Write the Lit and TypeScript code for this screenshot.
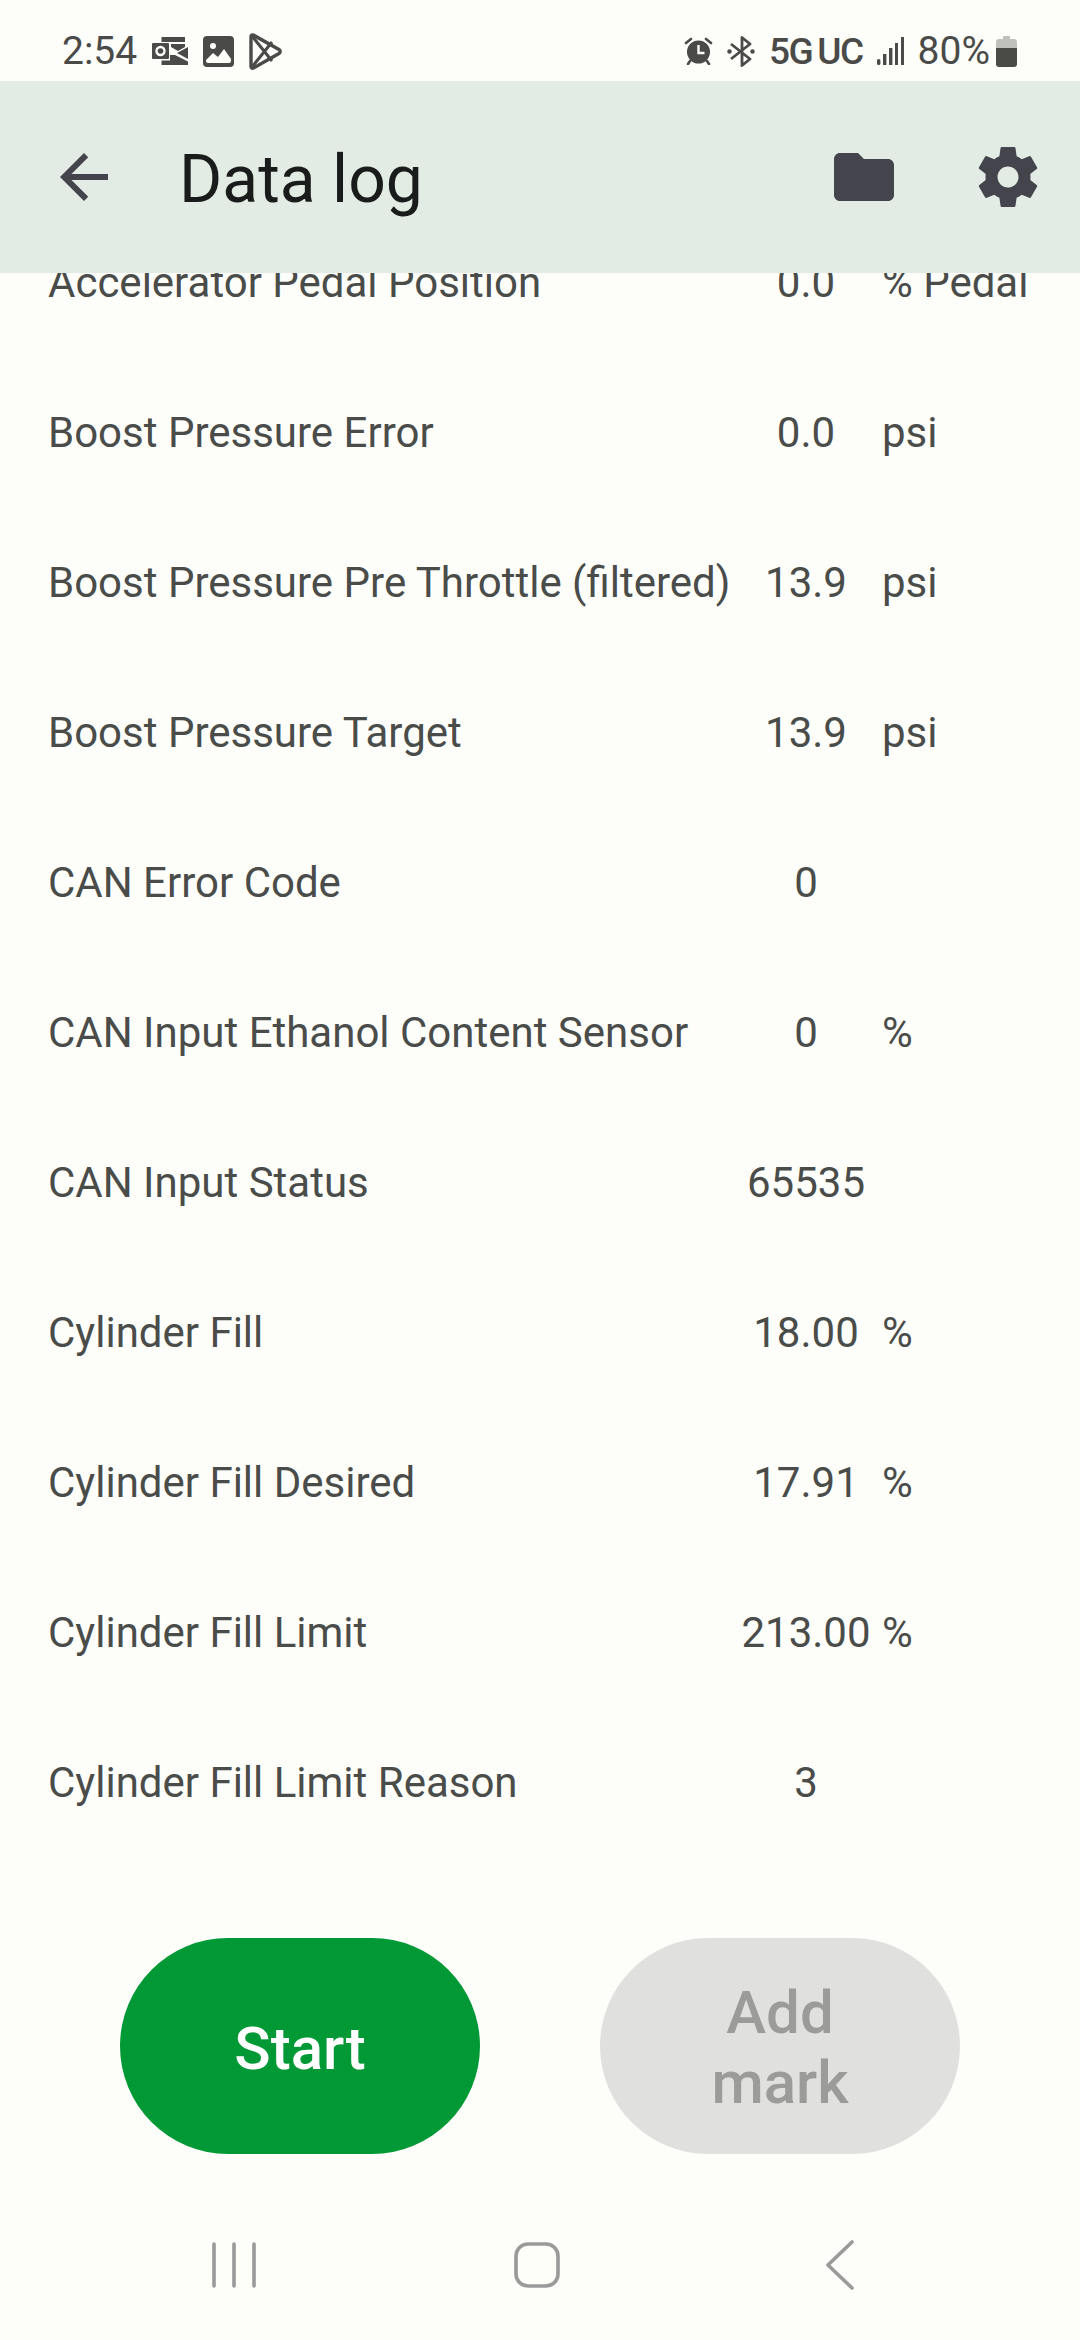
import { LitElement, html, css, svg } from 'lit';
import { customElement } from 'lit/decorators.js';

interface LogRow {
  name: string;
  value: string;
  unit: string;
}

const rows: LogRow[] = [
  { name: 'Accelerator Pedal Position', value: '0.0', unit: '% Pedal' },
  { name: 'Boost Pressure Error', value: '0.0', unit: 'psi' },
  { name: 'Boost Pressure Pre Throttle (filtered)', value: '13.9', unit: 'psi' },
  { name: 'Boost Pressure Target', value: '13.9', unit: 'psi' },
  { name: 'CAN Error Code', value: '0', unit: '' },
  { name: 'CAN Input Ethanol Content Sensor', value: '0', unit: '%' },
  { name: 'CAN Input Status', value: '65535', unit: '' },
  { name: 'Cylinder Fill', value: '18.00', unit: '%' },
  { name: 'Cylinder Fill Desired', value: '17.91', unit: '%' },
  { name: 'Cylinder Fill Limit', value: '213.00', unit: '%' },
  { name: 'Cylinder Fill Limit Reason', value: '3', unit: '' },
];

const icon = (w: number, h: number, vb: string, body: unknown) =>
  html`<svg width=${w} height=${h} viewBox=${vb}>${body}</svg>`;

@customElement('app-root')
export class AppRoot extends LitElement {
  static styles = css`
    :host {
      display: flex;
      flex-direction: column;
      height: 2340px;
      background: #fdfefa;
      font-family: Roboto, 'Noto Sans', sans-serif;
      color: #454745;
      overflow: hidden;
    }
    svg {
      display: block;
      flex: none;
    }
    .status {
      height: 81px;
      flex: none;
      display: flex;
      align-items: center;
      justify-content: space-between;
      padding: 21px 63px 0 62px;
      box-sizing: border-box;
      font-size: 39px;
      color: #4a4b49;
    }
    .status-left,
    .status-right {
      display: flex;
      align-items: center;
    }
    .status-left {
      gap: 15px;
    }
    .status-right {
      gap: 14px;
    }
    .net {
      display: flex;
      gap: 5px;
      font-weight: 500;
      letter-spacing: -1.500px;
      font-size: 37px;
    }
    .batt {
      margin-left: -8px;
    }
    .appbar {
      height: 192px;
      flex: none;
      display: flex;
      align-items: center;
      padding: 0 36px 0 48px;
      background: #e2ebe4;
      position: relative;
      z-index: 1;
    }
    .appbar svg {
      fill: #44444c;
    }
    .title {
      flex: 1;
      margin-left: 59px;
      font-size: 66px;
      color: #191c1a;
      padding-top: 4px;
    }
    .actions {
      display: flex;
      gap: 72px;
    }
    .list {
      flex: 1;
      overflow: hidden;
      min-height: 0;
    }
    .rows {
      margin-top: -66px;
    }
    .row {
      height: 150px;
      display: grid;
      grid-template-columns: 682px 152px 1fr;
      align-items: center;
      padding-left: 48px;
      font-size: 42px;
      color: #4a4c4a;
      white-space: nowrap;
    }
    .value {
      text-align: center;
    }
    .footer {
      flex: none;
      display: flex;
      justify-content: center;
      gap: 120px;
      padding-bottom: 36px;
    }
    .btn {
      width: 360px;
      height: 216px;
      border-radius: 108px;
      display: flex;
      align-items: center;
      justify-content: center;
      text-align: center;
      font-size: 60px;
      line-height: 70px;
      font-weight: 500;
      box-sizing: border-box;
    }
    .start {
      background: #019836;
      color: #fff;
      padding-top: 6px;
    }
    .mark {
      background: #e0e1de;
      color: #9b9c99;
      padding: 4px 90px 0;
    }
    .nav {
      height: 150px;
      flex: none;
      display: flex;
      align-items: center;
      padding: 0 0 0 211px;
    }
    .nav .recents {
      width: 303px;
    }
    .nav .home {
      width: 311px;
    }
  `;

  render() {
    return html`
      <div class="status">
        <div class="status-left">
          <span>2:54</span>
          ${icon(36, 28, '0 0 36 28', svg`
            <g fill="#4a4b49">
              <path d="M9.500 0H33v5H9.500z" />
              <rect x="0" y="6" width="17" height="16" rx="1" />
              <path d="M19 7h14v3l-7 4-7-4zM36 10v12l-11-6z" />
              <path d="M9.500 23.500H18V18l5 0 13 6.500V28H9.500z" />
            </g>
            <circle cx="8.500" cy="14" r="4" fill="none" stroke="#fdfefa" stroke-width="2.400" />
          `)}
          ${icon(31, 31, '0 0 31 31', svg`
            <rect width="31" height="31" rx="4" fill="#4a4b49" />
            <circle cx="10" cy="10" r="3" fill="#fdfefa" />
            <path fill="#fdfefa" d="M3 24l7-7 5 4 6-8 7 10v2a2 2 0 0 1-2 2H5a2 2 0 0 1-2-2z" />
          `)}
          ${icon(33, 37, '0 0 33 37', svg`
            <path fill="none" stroke="#4a4b49" stroke-width="3.400" stroke-linejoin="round"
              d="M2 3.500c0-1.500 1.200-2 2.400-1.400L30 16.500c1.600 1 1.600 3 0 4L4.400 35c-1.200.6-2.400 0-2.400-1.500z" />
            <path fill="none" stroke="#4a4b49" stroke-width="3" d="M3 3l20 25M3 34L23 9" />
          `)}
        </div>
        <div class="status-right">
          ${icon(29, 28, '0 0 29 28', svg`
            <circle cx="14.500" cy="15" r="11.500" fill="#4a4b49" />
            <path fill="none" stroke="#fdfefa" stroke-width="2.400" d="M14.500 8v8h6" />
            <path fill="none" stroke="#4a4b49" stroke-width="2.600" stroke-linecap="round"
              d="M2 6l5-4M27 6l-5-4M6 24l-2 3M23 24l2 3" />
          `)}
          ${icon(28, 31, '0 0 28 31', svg`
            <path fill="none" stroke="#4a4b49" stroke-width="2.800" stroke-linejoin="round"
              d="M4 8l19 15-8 6.500V1.500l8 6.500L4 23" />
            <circle cx="2.500" cy="15.500" r="2.200" fill="#4a4b49" />
            <circle cx="25.500" cy="15.500" r="2.200" fill="#4a4b49" />
          `)}
          <span class="net"><span>5G</span><span>UC</span></span>
          ${icon(27, 28, '0 0 27 28', svg`
            <g fill="#4a4b49">
              <rect x="0" y="22" width="3.400" height="6" rx="1.500" />
              <rect x="6" y="17" width="3.400" height="11" />
              <rect x="12" y="11" width="3.400" height="17" />
              <rect x="18" y="6" width="3" height="22" />
              <rect x="24" y="0" width="3" height="28" />
            </g>
          `)}
          <span>80%</span>
          <span class="batt">${icon(21, 31, '0 0 21 31', svg`
            <path fill="#c0c1bd" d="M7 0h7v3h4a3 3 0 0 1 3 3v6H0V6a3 3 0 0 1 3-3h4z" />
            <path fill="#4a4b47" d="M0 12h21v16a3 3 0 0 1-3 3H3a3 3 0 0 1-3-3z" />
          `)}</span>
        </div>
      </div>
      <div class="appbar">
        ${icon(72, 72, '0 0 24 24', svg`<path d="M20 11H7.830l5.590-5.590L12 4l-8 8 8 8 1.410-1.410L7.830 13H20v-2z" />`)}
        <div class="title">Data log</div>
        <div class="actions">
          ${icon(72, 72, '0 0 24 24', svg`<path d="M10 4H4c-1.100 0-1.990.9-1.990 2L2 18c0 1.100.9 2 2 2h16c1.100 0 2-.9 2-2V8c0-1.100-.9-2-2-2h-8l-2-2z" />`)}
          ${icon(72, 72, '0 0 24 24', svg`<path d="M19.430 12.980c.04-.32.07-.64.07-.98s-.03-.66-.07-.98l2.110-1.650c.19-.15.24-.42.12-.64l-2-3.460c-.12-.22-.39-.3-.61-.22l-2.490 1c-.52-.4-1.080-.73-1.690-.98l-.38-2.650C14.460 2.180 14.250 2 14 2h-4c-.25 0-.46.18-.49.42l-.38 2.650c-.61.25-1.170.59-1.690.98l-2.490-1c-.23-.09-.49 0-.61.22l-2 3.460c-.13.22-.07.49.12.64l2.110 1.650c-.04.32-.07.65-.07.98s.03.66.07.98l-2.110 1.650c-.19.15-.24.42-.12.64l2 3.460c.12.22.39.3.61.22l2.490-1c.52.4 1.080.73 1.690.98l.38 2.650c.03.24.24.42.49.42h4c.25 0 .46-.18.49-.42l.38-2.650c.61-.25 1.170-.59 1.690-.98l2.490 1c.23.09.49 0 .61-.22l2-3.460c.12-.22.07-.49-.12-.64l-2.110-1.650zM12 15.500c-1.930 0-3.500-1.570-3.500-3.500s1.570-3.500 3.500-3.500 3.500 1.570 3.500 3.500-1.570 3.500-3.500 3.500z" />`)}
        </div>
      </div>
      <div class="list">
        <div class="rows">
          ${rows.map(
            (r) => html`
              <div class="row">
                <span>${r.name}</span>
                <span class="value">${r.value}</span>
                <span>${r.unit}</span>
              </div>
            `
          )}
        </div>
      </div>
      <div class="footer">
        <div class="btn start">Start</div>
        <div class="btn mark">Add mark</div>
      </div>
      <div class="nav">
        <div class="recents">
          ${icon(46, 46, '0 0 46 46', svg`
            <path fill="none" stroke="#9a9a9a" stroke-width="3.600" stroke-linecap="round" d="M3 2v42M23 2v42M43 2v42" />
          `)}
        </div>
        <div class="home">
          ${icon(46, 46, '0 0 46 46', svg`
            <rect x="2" y="2" width="42" height="42" rx="12" fill="none" stroke="#9a9a9a" stroke-width="3.600" />
          `)}
        </div>
        ${icon(30, 50, '0 0 30 50', svg`
          <path fill="none" stroke="#9a9a9a" stroke-width="3.600" stroke-linecap="round" stroke-linejoin="round" d="M27 2L3 25l24 23" />
        `)}
      </div>
    `;
  }
}
